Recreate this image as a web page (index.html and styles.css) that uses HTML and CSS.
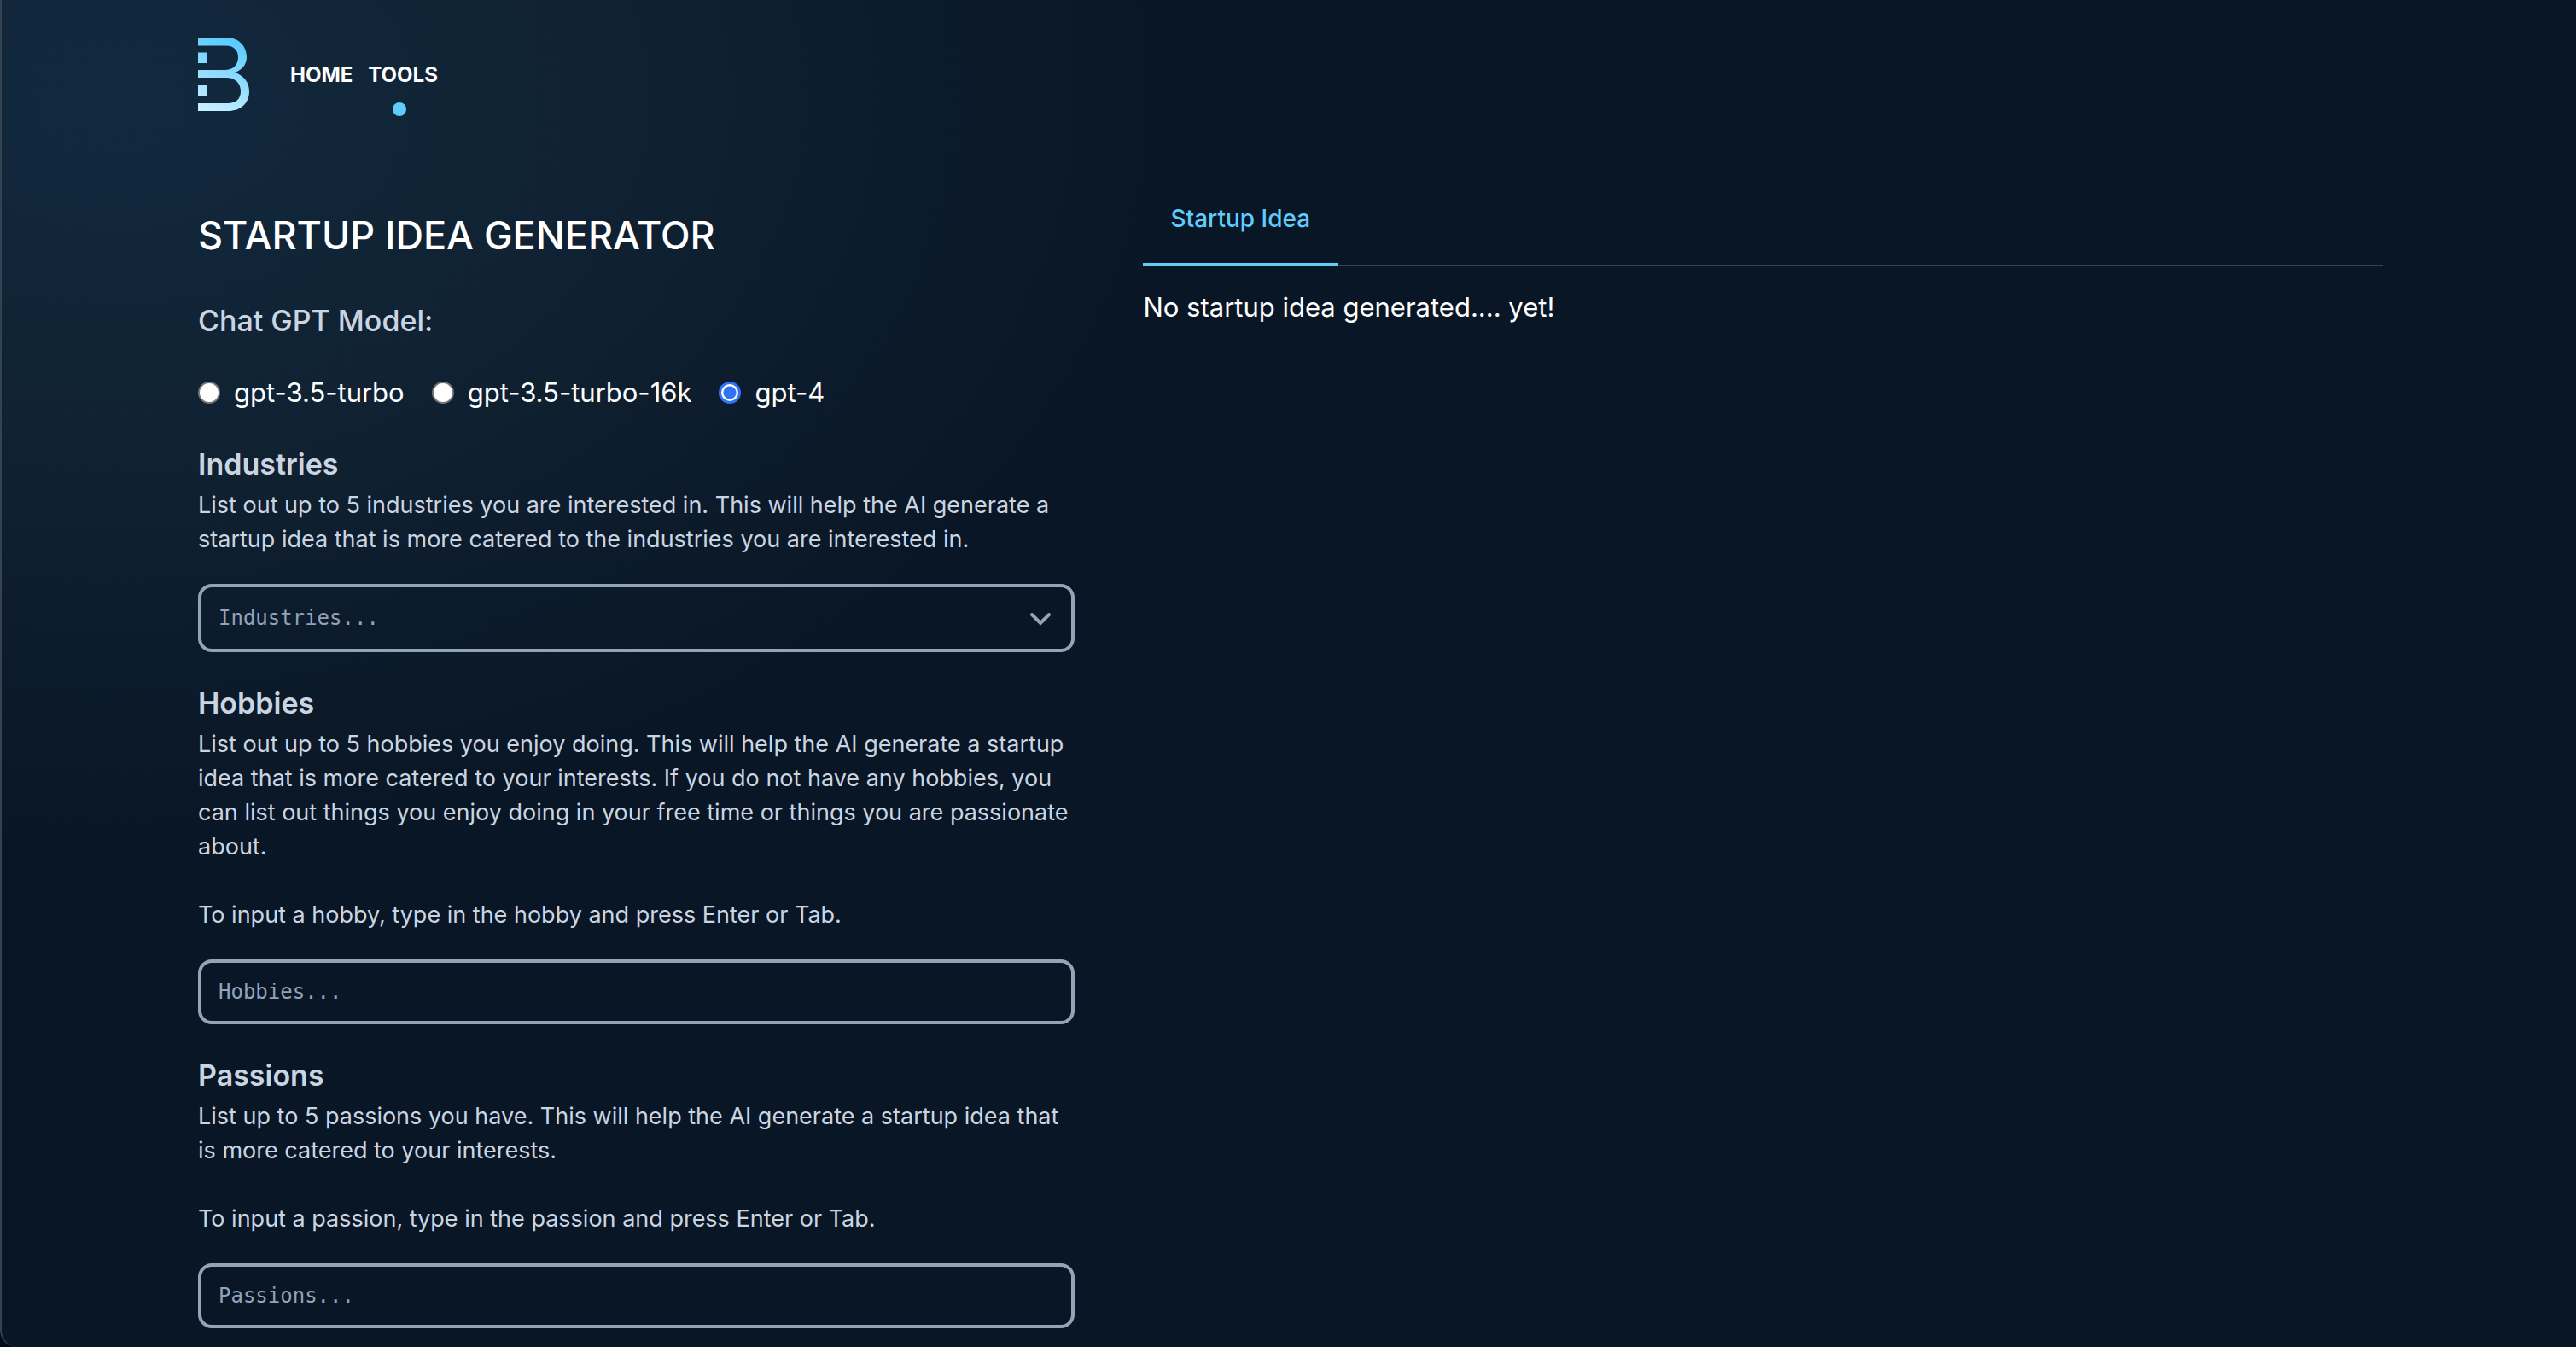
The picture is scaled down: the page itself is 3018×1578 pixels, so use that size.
FILE: index.html
```html
<!DOCTYPE html>
<html lang="en">
<head>
<meta charset="utf-8">
<meta name="viewport" content="width=device-width, initial-scale=1">
<title>Startup Idea Generator</title>
<link rel="stylesheet" href="styles.css">
</head>
<body>
<div class="page">
  <header class="header">
    <a class="logo" href="#" aria-label="Home page">
      <svg width="60" height="86" viewBox="0 0 60 86" aria-hidden="true">
        <defs>
          <linearGradient id="logo-fill" x1="42" y1="4" x2="12" y2="86" gradientUnits="userSpaceOnUse">
            <stop offset="0" stop-color="#5acbff"/>
            <stop offset="1" stop-color="#c8eeff"/>
          </linearGradient>
        </defs>
        <g fill="url(#logo-fill)">
          <path d="M0 0H33C48 0 57 10 57 23C57 31 52 38 43 41C53 44 60 52 60 63C60 77 50 86 35 86H0V77H35C44 77 50 72 50 63C50 53 43 47 33 47H0V38H31C41 38 47 32 47 23C47 14 41 9.500 33 9.500H0Z"/>
          <path d="M0 17.500H11V30H0ZM0 56H11V68H0Z"/>
        </g>
      </svg>
    </a>
    <nav class="nav">
      <a class="nav-link" href="#">HOME</a>
      <a class="nav-link nav-link-active" href="#">TOOLS</a>
    </nav>
  </header>

  <main class="layout">
    <form class="form">
      <h1 class="title">STARTUP IDEA GENERATOR</h1>

      <fieldset class="models">
        <legend class="models-legend">Chat GPT Model:</legend>
        <div class="models-row">
          <label class="model"><input class="radio" type="radio" name="model">gpt-3.5-turbo</label>
          <label class="model"><input class="radio" type="radio" name="model">gpt-3.5-turbo-16k</label>
          <label class="model"><input class="radio" type="radio" name="model" checked>gpt-4</label>
        </div>
      </fieldset>

      <section class="field">
        <label class="field-label" for="industries">Industries</label>
        <p class="field-text">List out up to 5 industries you are interested in. This will help the AI generate a startup idea that is more catered to the industries you are interested in.</p>
        <div class="select-wrap">
          <select class="control control-select" id="industries">
            <option>Industries...</option>
          </select>
          <svg class="chevron" width="26" height="16" viewBox="0 0 26 16" aria-hidden="true">
            <path d="M3 3L13 13L23 3" fill="none" stroke="#94a3b8" stroke-width="4" stroke-linecap="round"/>
          </svg>
        </div>
      </section>

      <section class="field">
        <label class="field-label" for="hobbies">Hobbies</label>
        <p class="field-text">List out up to 5 hobbies you enjoy doing. This will help the AI generate a startup idea that is more catered to your interests. If you do not have any hobbies, you can list out things you enjoy doing in your free time or things you are passionate about.</p>
        <p class="field-text field-hint">To input a hobby, type in the hobby and press Enter or Tab.</p>
        <input class="control" id="hobbies" type="text" placeholder="Hobbies...">
      </section>

      <section class="field">
        <label class="field-label" for="passions">Passions</label>
        <p class="field-text">List up to 5 passions you have. This will help the AI generate a startup idea that is more catered to your interests.</p>
        <p class="field-text field-hint">To input a passion, type in the passion and press Enter or Tab.</p>
        <input class="control" id="passions" type="text" placeholder="Passions...">
      </section>
    </form>

    <section class="results">
      <div class="tabs" role="tablist">
        <button class="tab" type="button" role="tab" aria-selected="true">Startup Idea</button>
      </div>
      <p class="empty">No startup idea generated.... yet!</p>
    </section>
  </main>
</div>
</body>
</html>
```
FILE: styles.css
```css
* {
  box-sizing: border-box;
  margin: 0;
}

html {
  background: #050b14;
}

body {
  font-family: Inter, "Liberation Sans", sans-serif;
  font-size: 31px;
  line-height: 48px;
  color: #fff;
}

.page {
  min-height: 100vh;
  padding: 44px 226px 22px 230px;
  border-left: 2px solid #35424f;
  border-bottom-left-radius: 20px;
  background:
    radial-gradient(1250px 880px at 130px 110px, #12293e 0%, #102233 45%, rgba(9, 22, 37, 0) 100%),
    #091625;
}

.header {
  display: flex;
  align-items: center;
  gap: 48px;
  height: 86px;
}

.logo,
.logo svg {
  display: block;
}

.nav {
  display: flex;
  gap: 18px;
  padding-top: 2px;
}

.nav-link {
  position: relative;
  font-size: 24px;
  line-height: 32px;
  font-weight: 700;
  color: #fff;
  text-decoration: none;
}

.nav-link-active::after {
  content: "";
  position: absolute;
  top: 48px;
  left: calc(50% - 12px);
  width: 16px;
  height: 16px;
  border-radius: 50%;
  background: #5fcdfb;
}

.layout {
  display: grid;
  grid-template-columns: 29fr 41fr;
  gap: 80px;
  align-items: start;
  padding-top: 74px;
}

.form {
  display: flex;
  flex-direction: column;
  gap: 32px;
  padding-top: 40px;
}

.title {
  font-size: 45px;
  line-height: 64px;
  font-weight: 500;
}

.models {
  min-width: 0;
  padding: 8px 0 0;
  border: 0;
}

.models-legend {
  padding: 8px 0 24px;
  font-size: 34px;
  line-height: 56px;
  font-weight: 500;
  color: #cbd5e1;
}

.models-row {
  display: flex;
  gap: 32px;
}

.model {
  display: flex;
  align-items: center;
  gap: 16px;
}

.radio {
  width: 26px;
  height: 26px;
  margin: 0;
  appearance: none;
  border: 2px solid #767676;
  border-radius: 50%;
  background: #fff;
}

.radio:checked {
  border: 3px solid #2f73f6;
  background: radial-gradient(circle, #2f73f6 0 7px, #fff 8px);
}

.field {
  display: flex;
  flex-direction: column;
}

.field-label {
  font-size: 34px;
  line-height: 56px;
  font-weight: 600;
  color: #cbd5e1;
}

.field-text {
  font-size: 27px;
  line-height: 40px;
  color: #cbd5e1;
}

.field-hint {
  margin-top: 40px;
}

.control {
  width: 100%;
  height: 76px;
  margin-top: 32px;
  padding: 0 20px;
  border: 4px solid #94a3b8;
  border-radius: 16px;
  background: transparent;
  font-family: "DejaVu Sans Mono", monospace;
  font-size: 24px;
  color: #94a3b8;
}

.control::placeholder {
  color: #94a3b8;
  opacity: 1;
}

.select-wrap {
  position: relative;
  display: flex;
}

.control-select {
  height: 80px;
  appearance: none;
}

.chevron {
  position: absolute;
  right: 27px;
  bottom: 31px;
  pointer-events: none;
}

.tabs {
  display: flex;
  border-bottom: 2px solid #374151;
}

.tab {
  margin-bottom: -2px;
  padding: 32px;
  border: 0;
  border-bottom: 4px solid #5fcdfb;
  background: none;
  font-family: inherit;
  font-size: 28px;
  line-height: 40px;
  font-weight: 500;
  color: #5fcdfb;
}

.empty {
  margin-top: 24px;
}
```
